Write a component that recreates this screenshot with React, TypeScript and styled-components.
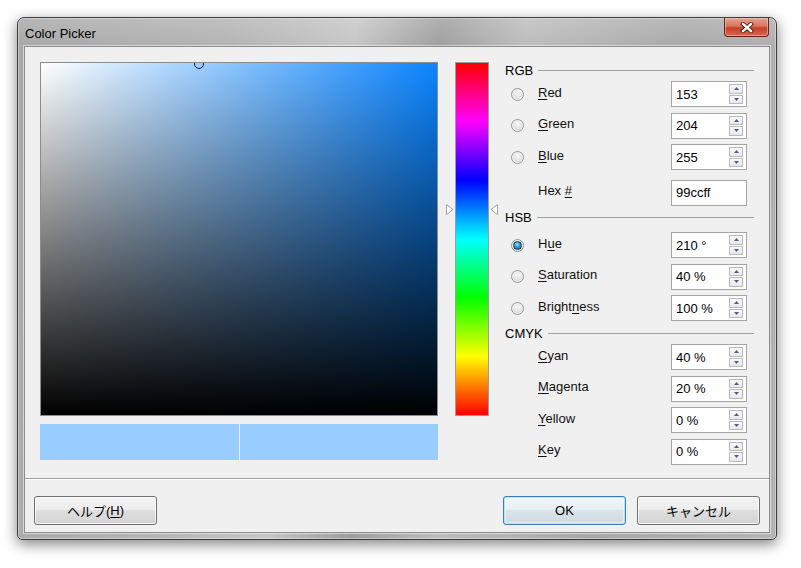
import React from 'react';
import styled, { createGlobalStyle } from 'styled-components';

const GlobalStyle = createGlobalStyle`
  html, body {
    margin: 0;
    padding: 0;
    background: #ffffff;
  }
  body {
    font-family: "Liberation Sans", "Noto Sans CJK JP", sans-serif;
    font-size: 13px;
    color: #000;
  }
`;

const Page = styled.div`
  width: 801px;
  height: 568px;
  padding: 17px 0 0 17px;
  box-sizing: border-box;
  overflow: hidden;
`;

const Window = styled.div`
  width: 760px;
  height: 523px;
  box-sizing: border-box;
  border: 1px solid #3e3e3e;
  border-radius: 7px 7px 5px 5px;
  padding: 0 6px 6px;
  display: flex;
  flex-direction: column;
  background:
    linear-gradient(180deg, rgba(255, 255, 255, 0.18) 0%, rgba(255, 255, 255, 0) 30px),
    linear-gradient(100deg, #a7a7a7 0%, #b3b3b3 25%, #c6c6c6 40%, #9e9e9e 50%, #bcbcbc 60%, #a9a9a9 78%, #b4b4b4 100%);
  box-shadow: 0 4px 14px rgba(0, 0, 0, 0.5), inset 0 0 0 1px rgba(255, 255, 255, 0.35);
`;

const TitleBar = styled.div`
  height: 28px;
  display: flex;
  align-items: center;
  padding: 0 1px 0 1px;
`;

const Title = styled.span`
  font-size: 13px;
  color: #000;
  margin-top: 2px;
`;

const CloseButton = styled.div`
  margin-left: auto;
  align-self: flex-start;
  width: 45px;
  height: 19px;
  box-sizing: border-box;
  border: 1px solid #6b2318;
  border-top: none;
  border-radius: 0 0 4px 4px;
  background: linear-gradient(180deg, #e6a192 0%, #d8765f 45%, #c5402a 55%, #d5684f 100%);
  box-shadow: inset 0 0 0 1px rgba(255, 220, 210, 0.45);
  display: flex;
  align-items: center;
  justify-content: center;
`;

const Client = styled.div`
  flex: 1;
  background: #f0f0f0;
  border: 1px solid #8a8a8a;
  box-shadow: 0 0 0 1px rgba(255, 255, 255, 0.5);
  display: flex;
  flex-direction: column;
`;

const Content = styled.div`
  display: flex;
  align-items: flex-start;
  height: 403px;
  padding: 15px 0 0 15px;
`;

const LeftColumn = styled.div`
  flex-shrink: 0;
  width: 398px;
  display: flex;
  flex-direction: column;
  gap: 8px;
`;

const ColorField = styled.div`
  position: relative;
  height: 354px;
  box-sizing: border-box;
  border: 1px solid #8c8c8c;
  overflow: hidden;
  background:
    linear-gradient(to top, #000 0%, rgba(0, 0, 0, 0) 100%),
    linear-gradient(to right, #ffffff 0%, hsl(210, 100%, 52%) 100%);
`;

const FieldMarker = styled.div`
  position: absolute;
  width: 10px;
  height: 10px;
  box-sizing: border-box;
  border: 1px solid #1c1c2a;
  border-radius: 50%;
`;

const Preview = styled.div`
  height: 36px;
  display: flex;
  gap: 1px;
  background: #e8f2ff;
`;

const Swatch = styled.div<{ $color: string }>`
  flex: 1;
  background: ${(p) => p.$color};
`;

const HueColumn = styled.div`
  flex-shrink: 0;
  position: relative;
  margin-left: 17px;
  width: 34px;
  height: 354px;
`;

const HueBar = styled.div`
  height: 100%;
  box-sizing: border-box;
  border: 1px solid #9c9c9c;
  background: linear-gradient(
    to bottom,
    #ff0000 0%,
    #ff00ff 16.67%,
    #0000ff 33.33%,
    #00ffff 50%,
    #00ff00 66.67%,
    #ffff00 83.33%,
    #ff0000 100%
  );
`;

const HueArrow = styled.svg<{ $side: 'left' | 'right' }>`
  position: absolute;
  top: 142px;
  ${(p) => (p.$side === 'left' ? 'left: -9px;' : 'right: -9px;')}
`;

const RightPanel = styled.div`
  flex-shrink: 0;
  margin-left: 16px;
  width: 249px;
  display: flex;
  flex-direction: column;
`;

const SectionHeader = styled.div<{ $top: number }>`
  height: 16px;
  margin-top: ${(p) => p.$top}px;
  display: flex;
  align-items: center;
  gap: 5px;
  font-size: 13px;

  &::after {
    content: '';
    flex: 1;
    height: 1px;
    background: #a0a0a0;
    margin-top: 1px;
  }
`;

const Rows = styled.div<{ $top: number }>`
  margin-top: ${(p) => p.$top}px;
  display: flex;
  flex-direction: column;
  gap: 5.5px;
`;

const Row = styled.div<{ $extra?: number }>`
  display: grid;
  grid-template-columns: 33px 133px 76px;
  align-items: center;
  height: 26px;
  margin-top: ${(p) => p.$extra || 0}px;
`;

const RadioCell = styled.div`
  display: flex;
  padding-left: 6px;
`;

const Radio = styled.span<{ $checked?: boolean }>`
  width: 13px;
  height: 13px;
  box-sizing: border-box;
  border-radius: 50%;
  border: 1px solid #949494;
  background: radial-gradient(circle at 50% 35%, #f8f8f8 0%, #e2e2e2 55%, #c9c9c9 100%);
  box-shadow: inset 0 0 0 1px #f4f4f4;
  display: flex;
  align-items: center;
  justify-content: center;

  &::after {
    content: '';
    display: ${(p) => (p.$checked ? 'block' : 'none')};
    width: 7px;
    height: 7px;
    border-radius: 50%;
    background: radial-gradient(circle at 45% 35%, #a8e4ff 0%, #3d9fd6 40%, #135a8c 100%);
    border: 0.5px solid #0e3f63;
  }
`;

const Label = styled.span`
  font-size: 13px;
  color: #111;
  padding-bottom: 4px;
  white-space: nowrap;
`;

const Key = styled.u`
  text-underline-offset: 2px;
`;

const TextBox = styled.div`
  position: relative;
  height: 26px;
  box-sizing: border-box;
  border: 1px solid #a5a5a5;
  background: #fff;
  display: flex;
  align-items: center;
  padding-left: 4px;
  font-size: 13px;
`;

const Spin = styled.div`
  position: absolute;
  top: 2px;
  bottom: 2px;
  right: 3px;
  width: 14px;
  display: flex;
  flex-direction: column;
`;

const SpinHalf = styled.div`
  flex: 1;
  box-sizing: border-box;
  border: 1px solid #b8b8b8;
  background: linear-gradient(180deg, #fafafa 0%, #e9e9e9 100%);
  display: flex;
  align-items: center;
  justify-content: center;

  & + & {
    margin-top: 1px;
  }
`;

const Separator = styled.div`
  margin-top: 13px;
  height: 1px;
  background: #a0a0a0;
  border-bottom: 1px solid #ffffff;
`;

const ButtonBar = styled.div`
  display: flex;
  gap: 11px;
  padding: 16px 9px 0;
`;

const Button = styled.div<{ $default?: boolean; $push?: boolean }>`
  width: 123px;
  height: 29px;
  box-sizing: border-box;
  border: 1px solid ${(p) => (p.$default ? '#3c7fb1' : '#707070')};
  border-radius: 3px;
  margin-left: ${(p) => (p.$push ? 'auto' : '0')};
  background: ${(p) =>
    p.$default
      ? 'linear-gradient(180deg, #f2f6f8 0%, #e6eef2 50%, #d9e3e9 50%, #cfdbe2 100%)'
      : 'linear-gradient(180deg, #f4f4f4 0%, #ececec 50%, #dfdfdf 50%, #d3d3d3 100%)'};
  box-shadow: ${(p) =>
    p.$default ? 'inset 0 0 0 1px #b6e3f8, inset 0 0 0 2px rgba(255,255,255,0.4)' : 'inset 0 0 0 1px rgba(255,255,255,0.75)'};
  display: flex;
  align-items: center;
  justify-content: center;
  font-size: 13px;
  color: #000;
`;

const ArrowUp = () => (
  <svg width="5" height="3" viewBox="0 0 5 3">
    <polygon points="0,3 2.5,0 5,3" fill="#4b5d86" />
  </svg>
);

const ArrowDown = () => (
  <svg width="5" height="3" viewBox="0 0 5 3">
    <polygon points="0,0 5,0 2.5,3" fill="#4b5d86" />
  </svg>
);

const SpinField: React.FC<{ value: string; spin?: boolean }> = ({ value, spin = true }) => (
  <TextBox>
    {value}
    {spin && (
      <Spin>
        <SpinHalf>
          <ArrowUp />
        </SpinHalf>
        <SpinHalf>
          <ArrowDown />
        </SpinHalf>
      </Spin>
    )}
  </TextBox>
);

type Item = {
  before: string;
  key: string;
  after: string;
  value: string;
  radio?: boolean;
  checked?: boolean;
  spin?: boolean;
  extra?: number;
};

const rgbRows: Item[] = [
  { before: '', key: 'R', after: 'ed', value: '153', radio: true },
  { before: '', key: 'G', after: 'reen', value: '204', radio: true },
  { before: '', key: 'B', after: 'lue', value: '255', radio: true },
  { before: 'Hex ', key: '#', after: '', value: '99ccff', spin: false, extra: 4 },
];

const hsbRows: Item[] = [
  { before: 'H', key: 'u', after: 'e', value: '210 °', radio: true, checked: true },
  { before: '', key: 'S', after: 'aturation', value: '40 %', radio: true },
  { before: 'Bright', key: 'n', after: 'ess', value: '100 %', radio: true },
];

const cmykRows: Item[] = [
  { before: '', key: 'C', after: 'yan', value: '40 %' },
  { before: '', key: 'M', after: 'agenta', value: '20 %' },
  { before: '', key: 'Y', after: 'ellow', value: '0 %' },
  { before: '', key: 'K', after: 'ey', value: '0 %' },
];

const Section: React.FC<{ title: string; top: number; rowsTop: number; items: Item[] }> = ({
  title,
  top,
  rowsTop,
  items,
}) => (
  <>
    <SectionHeader $top={top}>{title}</SectionHeader>
    <Rows $top={rowsTop}>
      {items.map((it) => (
        <Row key={it.before + it.key + it.after} $extra={it.extra}>
          <RadioCell>{it.radio && <Radio $checked={it.checked} />}</RadioCell>
          <Label>
            {it.before}
            <Key>{it.key}</Key>
            {it.after}
          </Label>
          <SpinField value={it.value} spin={it.spin !== false} />
        </Row>
      ))}
    </Rows>
  </>
);

const App: React.FC = () => {
  const saturation = 0.4;

  return (
    <>
      <GlobalStyle />
      <Page>
        <Window>
          <TitleBar>
            <Title>Color Picker</Title>
            <CloseButton>
              <svg width="14" height="11" viewBox="0 0 14 11">
                <path d="M3 2 L11 9 M11 2 L3 9" stroke="#4a140c" strokeWidth="4.2" strokeLinecap="square" />
                <path d="M3 2 L11 9 M11 2 L3 9" stroke="#ffffff" strokeWidth="2.4" strokeLinecap="square" />
              </svg>
            </CloseButton>
          </TitleBar>

          <Client>
            <Content>
              <LeftColumn>
                <ColorField>
                  <FieldMarker style={{ left: saturation * 396 - 5, top: -4 }} />
                </ColorField>
                <Preview>
                  <Swatch $color="#99ccff" />
                  <Swatch $color="#99ccff" />
                </Preview>
              </LeftColumn>

              <HueColumn>
                <HueBar />
                <HueArrow $side="left" width="8" height="11" viewBox="0 0 8 11">
                  <polygon points="0.5,0.5 7,5.5 0.5,10.5" fill="#ffffff" stroke="#a0a0a0" />
                </HueArrow>
                <HueArrow $side="right" width="8" height="11" viewBox="0 0 8 11">
                  <polygon points="7.5,0.5 1,5.5 7.5,10.5" fill="#ffffff" stroke="#a0a0a0" />
                </HueArrow>
              </HueColumn>

              <RightPanel>
                <Section title="RGB" top={0} rowsTop={3} items={rgbRows} />
                <Section title="HSB" top={3.5} rowsTop={7} items={hsbRows} />
                <Section title="CMYK" top={4} rowsTop={3} items={cmykRows} />
              </RightPanel>
            </Content>

            <Separator />

            <ButtonBar>
              <Button>
                ヘルプ(<Key>H</Key>)
              </Button>
              <Button $default $push>
                OK
              </Button>
              <Button>キャンセル</Button>
            </ButtonBar>
          </Client>
        </Window>
      </Page>
    </>
  );
};

export default App;
